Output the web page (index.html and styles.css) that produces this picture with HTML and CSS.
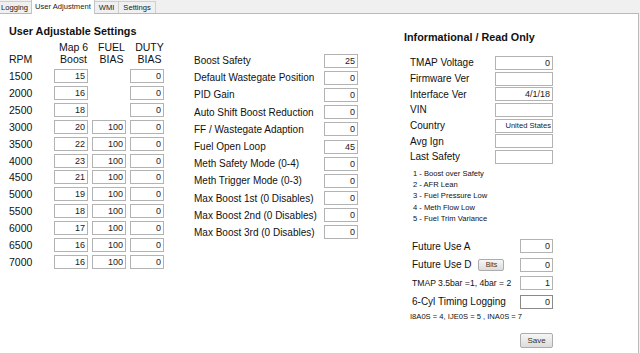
FILE: index.html
```html
<!DOCTYPE html>
<html lang="en">
<head>
    <meta charset="UTF-8">
    <meta name="viewport" content="width=device-width, initial-scale=1.0">
    <title>User Adjustment</title>
    <link rel="stylesheet" href="styles.css">
</head>
<body>
    <div class="tabs">
        <div class="tab first">Logging</div>
        <div class="tab active">User Adjustment</div>
        <div class="tab">WMI</div>
        <div class="tab">Settings</div>
    </div>

    <div class="panel">
        <!-- left: boost / bias table -->
        <div class="col col-left">
            <h2>User Adjustable Settings</h2>
            <div class="rpm-grid">
                <div class="hdr rpm-hdr">RPM</div>
                <div class="hdr">Map 6<br>Boost</div>
                <div class="hdr">FUEL<br>BIAS</div>
                <div class="hdr">DUTY<br>BIAS</div>

                <div class="rpm">1500</div><input value="15"><span></span><input value="0">
                <div class="rpm">2000</div><input value="16"><span></span><input value="0">
                <div class="rpm">2500</div><input value="18"><span></span><input value="0">
                <div class="rpm">3000</div><input value="20"><input value="100"><input value="0">
                <div class="rpm">3500</div><input value="22"><input value="100"><input value="0">
                <div class="rpm">4000</div><input value="23"><input value="100"><input value="0">
                <div class="rpm">4500</div><input value="21"><input value="100"><input value="0">
                <div class="rpm">5000</div><input value="19"><input value="100"><input value="0">
                <div class="rpm">5500</div><input value="18"><input value="100"><input value="0">
                <div class="rpm">6000</div><input value="17"><input value="100"><input value="0">
                <div class="rpm">6500</div><input value="16"><input value="100"><input value="0">
                <div class="rpm">7000</div><input value="16"><input value="100"><input value="0">
            </div>
        </div>

        <!-- middle: general settings -->
        <div class="col col-mid">
            <div class="set-grid">
                <label>Boost Safety</label><input value="25">
                <label>Default Wastegate Position</label><input value="0">
                <label>PID Gain</label><input value="0">
                <label>Auto Shift Boost Reduction</label><input value="0">
                <label>FF / Wastegate Adaption</label><input value="0">
                <label>Fuel Open Loop</label><input value="45">
                <label>Meth Safety Mode (0-4)</label><input value="0">
                <label>Meth Trigger Mode (0-3)</label><input value="0">
                <label>Max Boost 1st (0 Disables)</label><input value="0">
                <label>Max Boost 2nd (0 Disables)</label><input value="0">
                <label>Max Boost 3rd (0 Disables)</label><input value="0">
            </div>
        </div>

        <!-- right: read only info -->
        <div class="col col-right">
            <h2>Informational / Read Only</h2>
            <div class="info-grid">
                <label>TMAP Voltage</label><input value="0" readonly>
                <label>Firmware Ver</label><input value="" readonly>
                <label>Interface Ver</label><input value="4/1/18" readonly>
                <label>VIN</label><input value="" readonly>
                <label>Country</label><input class="small" value="United States" readonly>
                <label>Avg Ign</label><input value="" readonly>
                <label>Last Safety</label><input value="" readonly>
            </div>
            <ul class="legend">
                <li>1 - Boost over Safety</li>
                <li>2 - AFR Lean</li>
                <li>3 - Fuel Pressure Low</li>
                <li>4 - Meth Flow Low</li>
                <li>5 - Fuel Trim Variance</li>
            </ul>
            <div class="future-grid">
                <label>Future Use A</label><input value="0">
                <label>Future Use D <button class="btn bits">Bits</button></label><input value="0">
                <label class="tmap">TMAP 3.5bar =1, 4bar = 2</label><input value="1">
                <label>6-Cyl Timing Logging</label><input class="focus" value="0">
            </div>
            <div class="note">I8A0S = 4, IJE0S = 5 , INA0S = 7</div>
            <button class="btn save">Save</button>
        </div>
    </div>
</body>
</html>
```

FILE: styles.css
```css
body {
    margin: 0;
    padding: 0;
    background: #f0f0f0;
    font-family: "Liberation Sans", Arial, sans-serif;
    font-size: 10px;
    color: #111;
    height: 353px;
    overflow: hidden;
    display: flex;
    flex-direction: column;
}

/* tab strip */
.tabs {
    display: flex;
    align-items: flex-end;
    height: 13px;
    font-size: 7.6px;
}
.tab {
    height: 11px;
    line-height: 11px;
    padding: 0 4px;
    border: 1px solid #cfcfcf;
    border-bottom: none;
    color: #222;
    margin-right: -1px;
    white-space: nowrap;
}
.tab.first {
    margin-left: -4px;
    padding-right: 3px;
}
.tab.active {
    position: relative;
    height: 14px;
    line-height: 14px;
    padding: 0 3px;
    background: #fff;
    border-color: #c4c4c4;
    z-index: 1;
    margin-bottom: -1px;
}

.panel {
    flex: 1;
    background: #fff;
    border-top: 1px solid #b9b9b9;
    border-right: 1px solid #b9b9b9;
    margin-right: 1px;
    display: flex;
    padding-left: 9px;
}

.col {
    display: flex;
    flex-direction: column;
}

h2 {
    margin: 0;
    font-size: 10.8px;
    line-height: 14px;
    font-weight: bold;
    white-space: nowrap;
}

label {
    white-space: nowrap;
}

input {
    box-sizing: border-box;
    width: 34px;
    height: 14px;
    margin: 0;
    border: 1px solid #b3b3b3;
    padding: 0 2px;
    font-family: "Liberation Sans", Arial, sans-serif;
    font-size: 9px;
    text-align: right;
    color: #222;
    background: #fff;
    outline: none;
}
input.small {
    font-size: 7.6px;
    padding-right: 1px;
}
input.focus {
    border-color: #8a8a8a;
}

/* left column */
.col-left {
    width: 152px;
    padding-top: 10px;
}
.rpm-grid {
    margin-top: 3px;
    display: grid;
    grid-template-columns: 41px 34px 34px 34px;
    grid-template-rows: 24px;
    grid-auto-rows: 16.85px;
    column-gap: 4px;
    align-items: center;
    font-size: 10.5px;
}
.rpm-grid .hdr {
    line-height: 12px;
    text-align: center;
    padding-left: 5px;
    align-self: start;
    white-space: nowrap;
}
.rpm-grid .rpm-hdr {
    text-align: left;
    padding-left: 0;
    align-self: end;
}
.rpm-grid > :nth-child(n+5) {
    position: relative;
    top: 3px;
}

/* middle column */
.col-mid {
    margin-left: 33px;
    width: 164px;
    padding-top: 38px;
}
.set-grid {
    display: grid;
    grid-template-columns: 130px 34px;
    grid-auto-rows: 17.2px;
    align-items: center;
}

/* right column */
.col-right {
    margin-left: 46px;
    width: 149px;
    padding-top: 16px;
}
.info-grid {
    margin-top: 11px;
    padding-left: 6px;
    display: grid;
    grid-template-columns: 85px 58px;
    grid-auto-rows: 15.7px;
    align-items: center;
}
.info-grid input {
    width: 58px;
}
.legend {
    list-style: none;
    margin: 3px 0 0;
    padding-left: 9px;
    font-size: 7.6px;
    line-height: 11.25px;
}
.future-grid {
    margin-top: 13px;
    padding-left: 8px;
    display: grid;
    grid-template-columns: 108px 33px;
    grid-auto-rows: 18.5px;
    align-items: center;
}
.future-grid input {
    width: 33px;
}
.future-grid label {
    display: flex;
    align-items: center;
    gap: 7px;
}
.future-grid .tmap {
    font-size: 8.6px;
}
.note {
    padding-left: 6px;
    font-size: 7.6px;
    line-height: 12px;
}

.btn {
    font-family: "Liberation Sans", Arial, sans-serif;
    font-size: 7px;
    color: #333;
    background: linear-gradient(#f6f6f6, #dcdcdc);
    border: 1px solid #acacac;
    border-radius: 2px;
    padding: 0;
}
.bits {
    width: 26px;
    height: 12px;
}
.save {
    align-self: flex-end;
    margin-top: 10px;
    width: 33px;
    height: 15px;
    font-size: 8px;
}
```
